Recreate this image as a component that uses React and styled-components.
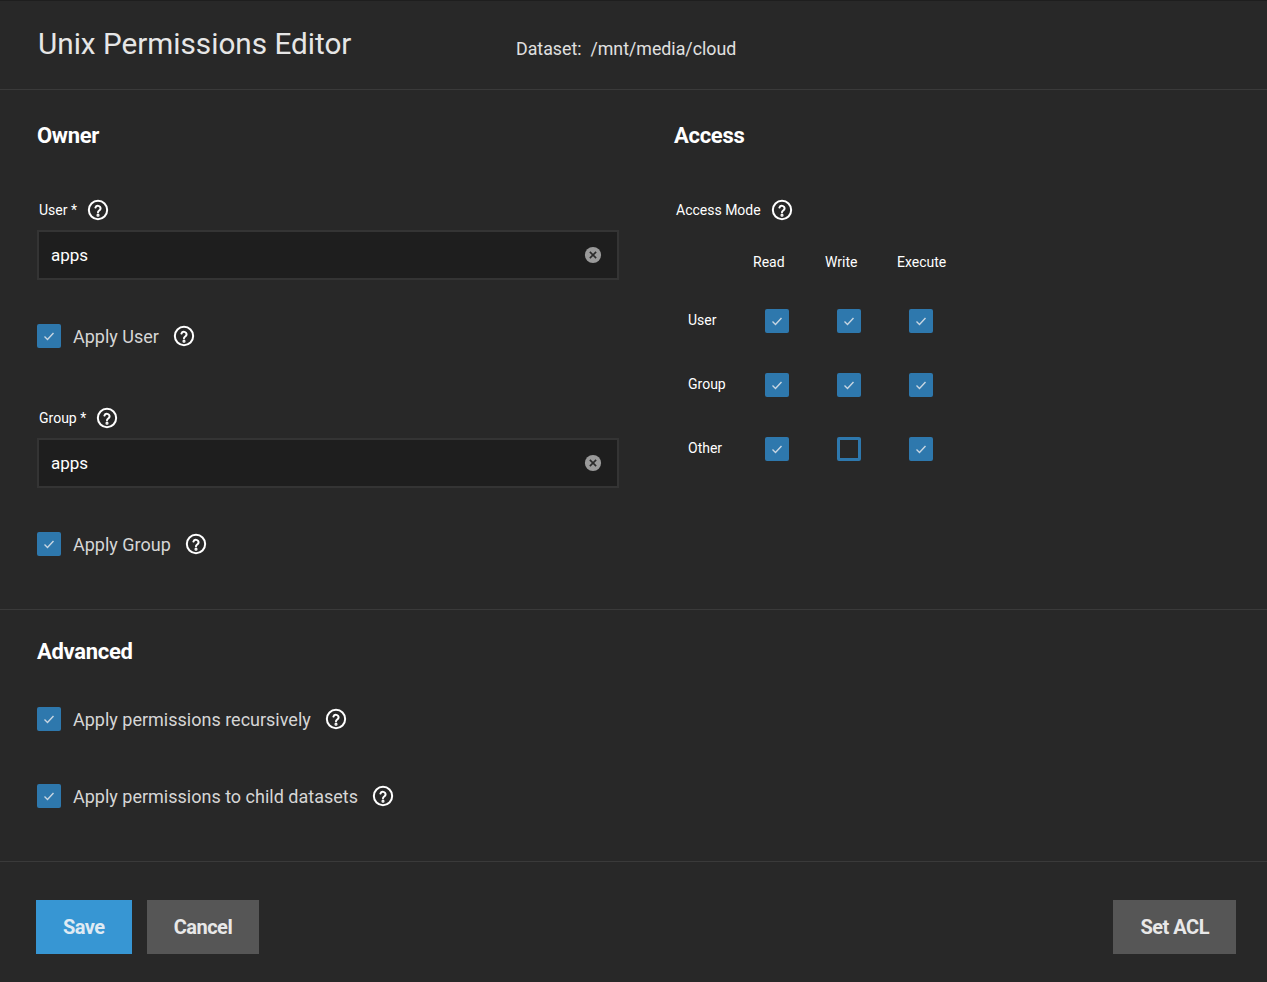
import styled, { createGlobalStyle } from "styled-components";

const Global = createGlobalStyle`
  html, body { margin: 0; background: #282828; }
  body { font-family: Roboto, "Noto Sans", sans-serif; color: #e6e6e6; }
`;

const Help = () => (
  <svg width="22" height="22" viewBox="0 0 24 24" fill="none" stroke="#fff" strokeWidth="2.2">
    <circle cx="12" cy="12" r="10" />
    <path d="M9.2 9.3a2.9 2.9 0 0 1 5.6 1c0 1.9-2.8 2.4-2.8 4.1" strokeLinecap="round" />
    <circle cx="12" cy="17.6" r="0.6" fill="#fff" />
  </svg>
);

const Clear = () => (
  <svg width="18" height="18" viewBox="0 0 20 20">
    <circle cx="10" cy="10" r="9" fill="#9a9a9a" />
    <path d="M6.5 6.5l7 7M13.5 6.5l-7 7" stroke="#2a2a2a" strokeWidth="1.8" />
  </svg>
);

const Box = ({ checked = true }) => (
  <SBox $checked={checked}>
    {checked && (
      <svg width="14" height="14" viewBox="0 0 14 14" fill="none" stroke="#c8d6e2" strokeWidth="1.4">
        <path d="M2.5 7.5l3 3 6-6.5" />
      </svg>
    )}
  </SBox>
);

const Field = ({ label, value }) => (
  <>
    <SLabel>{label} *<Help /></SLabel>
    <SInput>
      <span>{value}</span>
      <Clear />
    </SInput>
  </>
);

const Check = ({ children }) => (
  <SCheck>
    <Box />
    <span>{children}</span>
    <Help />
  </SCheck>
);

const rows = [
  ["User", [true, true, true]],
  ["Group", [true, true, true]],
  ["Other", [true, false, true]],
];

export default function App() {
  return (
    <SPage>
      <Global />
      <SHeader>
        <STitle>Unix Permissions Editor</STitle>
        <SDataset>Dataset:&nbsp; /mnt/media/cloud</SDataset>
      </SHeader>
      <SMain>
        <SCol>
          <SH3>Owner</SH3>
          <Field label="User" value="apps" />
          <Check>Apply User</Check>
          <SSpacer />
          <Field label="Group" value="apps" />
          <Check>Apply Group</Check>
        </SCol>
        <SCol>
          <SH3>Access</SH3>
          <SLabel>Access Mode<Help /></SLabel>
          <SGrid>
            <span />
            <SHead>Read</SHead>
            <SHead>Write</SHead>
            <SHead>Execute</SHead>
            {rows.map(([name, vals]) => (
              <SRow key={name}>
                <SRowLabel>{name}</SRowLabel>
                {vals.map((v, i) => (
                  <SCell key={i}><Box checked={v} /></SCell>
                ))}
              </SRow>
            ))}
          </SGrid>
        </SCol>
      </SMain>
      <SAdvanced>
        <SH3>Advanced</SH3>
        <Check>Apply permissions recursively</Check>
        <Check>Apply permissions to child datasets</Check>
      </SAdvanced>
      <SFooter>
        <SButton $primary>Save</SButton>
        <SButton>Cancel</SButton>
        <SButton $right>Set ACL</SButton>
      </SFooter>
    </SPage>
  );
}

const SPage = styled.div`
  width: 1267px;
  height: 982px;
  background: #282828;
  border-top: 1px solid #1e1e1e;
  box-sizing: border-box;
`;

const SHeader = styled.div`
  height: 88px;
  display: flex;
  align-items: center;
  padding: 0 38px;
  border-bottom: 1px solid #3a3a3a;
`;

const STitle = styled.h1`
  margin: 0 0 4px;
  font-size: 29.7px;
  font-weight: 400;
  color: #e6e6e6;
  width: 478px;
`;

const SDataset = styled.div`
  font-size: 17.8px;
  color: #e0e0e0;
  margin-top: 6px;
`;

const SMain = styled.div`
  display: grid;
  grid-template-columns: 637px 1fr;
  padding: 0 0 43px 37px;
  border-bottom: 1px solid #3a3a3a;
`;

const SCol = styled.div`
  display: flex;
  flex-direction: column;
`;

const SH3 = styled.h3`
  margin: 33px 0 0;
  height: 74px;
  font-size: 22px;
  font-weight: 700;
  color: #fff;
  letter-spacing: -0.3px;
`;

const SLabel = styled.div`
  display: flex;
  align-items: center;
  gap: 10px;
  font-size: 14px;
  color: #fff;
  height: 26px;
  margin: 0 0 7px 2px;
`;

const SInput = styled.div`
  width: 582px;
  height: 50px;
  box-sizing: border-box;
  background: #1e1e1e;
  border: 2px solid #343434;
  display: flex;
  align-items: center;
  justify-content: space-between;
  padding: 0 15px 0 12px;
  font-size: 17px;
  color: #fff;
`;

const SCheck = styled.div`
  display: flex;
  align-items: center;
  height: 24px;
  margin: 44px 0 10px;
  font-size: 18px;
  color: #d6d6d6;
  span { margin: 0 14px 0 12px; }
`;

const SSpacer = styled.div`
  height: 47px;
`;

const SBox = styled.div`
  width: 24px;
  height: 24px;
  box-sizing: border-box;
  border-radius: 2px;
  background: ${(p) => (p.$checked ? "#2e78ad" : "transparent")};
  border: ${(p) => (p.$checked ? "none" : "3px solid #2e78ad")};
  display: flex;
  align-items: center;
  justify-content: center;
`;

const SGrid = styled.div`
  display: grid;
  grid-template-columns: 76px 72px 72px 72px;
  margin-top: 24px;
`;

const SHead = styled.div`
  font-size: 14px;
  color: #fff;
  padding-left: 3px;
  height: 43px;
`;

const SRow = styled.div`
  display: contents;
`;

const SRowLabel = styled.div`
  font-size: 14px;
  color: #fff;
  padding-left: 14px;
  height: 64px;
  line-height: 46px;
`;

const SCell = styled.div`
  padding: 12px 0 0 15px;
`;

const SAdvanced = styled.div`
  padding: 0 37px 53px;
  border-bottom: 1px solid #3a3a3a;
  ${SH3} { margin-top: 29px; height: 60px; }
  ${SCheck} { margin: 8px 0 53px; }
  ${SCheck}:last-child { margin-bottom: 0; }
`;

const SFooter = styled.div`
  display: flex;
  gap: 15px;
  padding: 38px 31px 0 36px;
`;

const SButton = styled.button`
  height: 54px;
  padding: 0 27px;
  border: none;
  font-family: Roboto, sans-serif;
  font-size: 20px;
  font-weight: 700;
  letter-spacing: -0.5px;
  color: ${(p) => (p.$primary ? "#dfeaf3" : "#e8e8e8")};
  background: ${(p) => (p.$primary ? "#3796d3" : "#565656")};
  margin-left: ${(p) => (p.$right ? "auto" : "0")};
`;
